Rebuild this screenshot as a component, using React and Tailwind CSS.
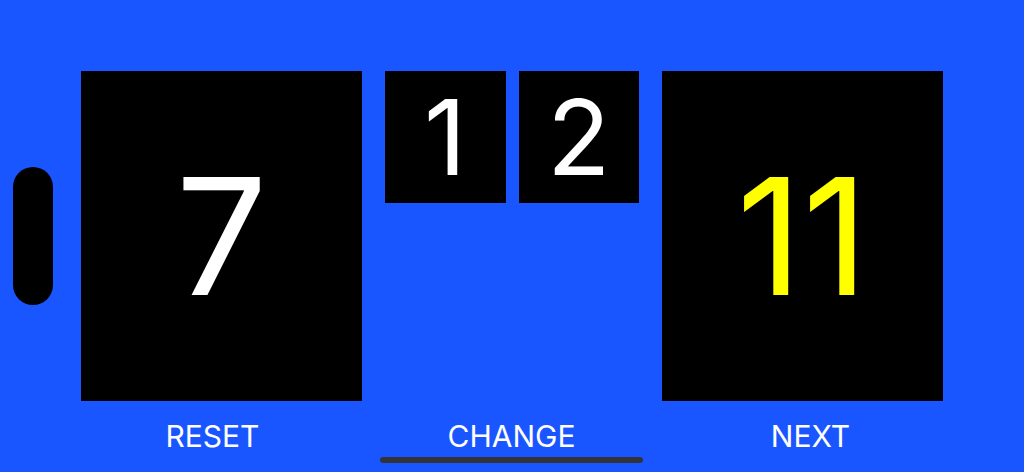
import React from "react";

const font = { fontFamily: "Inter, 'Noto Sans', sans-serif" };

function BigTile({ value, color }) {
  return (
    <div className="w-[281px] h-[330px] bg-black flex items-center justify-center">
      <span className={`text-[162px] leading-none ${color}`}>{value}</span>
    </div>
  );
}

function SmallTile({ value }) {
  return (
    <div className="w-[121px] h-[132px] bg-black flex items-center justify-center">
      <span className="text-[104px] leading-none text-white">{value}</span>
    </div>
  );
}

export default function App() {
  const labels = ["RESET", "CHANGE", "NEXT"];

  return (
    <div
      className="relative w-[1024px] h-[472px] bg-[#1a56ff] overflow-hidden"
      style={font}
    >
      <div className="flex items-center pt-[71px] pl-[13px]">
        <div className="w-[40px] h-[138px] rounded-full bg-black" />
        <div className="flex items-start gap-[23px] ml-[28px]">
          <BigTile value="7" color="text-white" />
          <div className="flex gap-[13px] w-[254px]">
            <SmallTile value="1" />
            <SmallTile value="2" />
          </div>
          <BigTile value="11" color="text-[#ffff00]" />
        </div>
      </div>

      <div className="grid grid-cols-3 w-[897px] ml-[63px] mt-[17px]">
        {labels.map((label) => (
          <span
            key={label}
            className="text-center text-[30px] leading-[36px] text-white"
          >
            {label}
          </span>
        ))}
      </div>

      <div className="absolute left-[380px] top-[457px] w-[263px] h-[6px] rounded-full bg-[#333438]" />
    </div>
  );
}
